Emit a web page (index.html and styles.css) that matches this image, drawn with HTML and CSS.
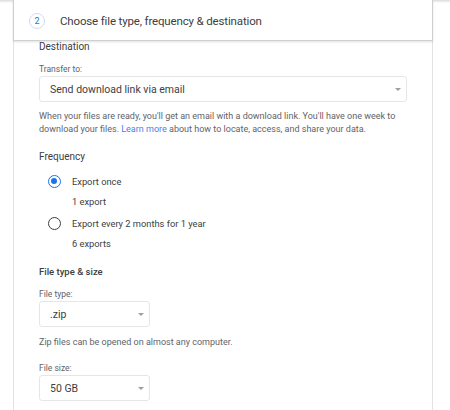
FILE: index.html
```html
<!DOCTYPE html>
<html>
<head>
<meta charset="utf-8">
<link rel="stylesheet" href="styles.css">
</head>
<body>
<div class="topshade"></div>
<div class="wrap">
  <div class="step-head">
    <span class="step-num">2</span>
    <span class="step-title">Choose file type, frequency &amp; destination</span>
  </div>
  <div class="step-body">
    <div class="heading">Destination</div>
    <div class="label">Transfer to:</div>
    <div class="select select-wide"><span>Send download link via email</span><span class="caret"></span></div>
    <p class="desc">When your files are ready, you'll get an email with a download link. You'll have one week to download your files. <a class="link">Learn more</a> about how to locate, access, and share your data.</p>

    <div class="heading heading-freq">Frequency</div>
    <div class="radio-row first"><span class="radio on"></span><span class="radio-text">Export once</span></div>
    <div class="sub">1 export</div>
    <div class="radio-row"><span class="radio"></span><span class="radio-text">Export every 2 months for 1 year</span></div>
    <div class="sub">6 exports</div>

    <div class="heading heading-type">File type &amp; size</div>
    <div class="label">File type:</div>
    <div class="select select-small"><span>.zip</span><span class="caret"></span></div>
    <div class="note">Zip files can be opened on almost any computer.</div>
    <div class="label label-size">File size:</div>
    <div class="select select-small"><span>50 GB</span><span class="caret"></span></div>
  </div>
</div>
</body>
</html>
```

FILE: styles.css
```css
* { box-sizing: border-box; }
html, body { margin: 0; padding: 0; background: #fff; }
body {
  font-family: Roboto, "Liberation Sans", Arial, sans-serif;
  color: #3c4043;
  height: 410px;
  overflow: hidden;
  display: flex;
  flex-direction: column;
}
.topshade {
  height: 3px;
  flex: none;
  background: linear-gradient(#dcdcdc, #f4f4f4 70%, #fff);
}
.wrap {
  margin-top: -3px;
  margin-left: 13px;
  width: 420px;
  flex: 1;
  display: flex;
  flex-direction: column;
}
.step-head {
  height: 41px;
  flex: none;
  border: 1px solid #cfcfcf;
  border-top: none;
  box-shadow: 0 1px 2px rgba(0,0,0,0.12);
  display: flex;
  align-items: center;
  padding-left: 15px;
  background: #fff;
  position: relative;
  padding-top: 1px;
}
.step-num {
  width: 16px;
  height: 16px;
  border: 1px solid #d2dcf0;
  border-radius: 50%;
  color: #1a73e8;
  font-size: 9px;
  display: flex;
  align-items: center;
  justify-content: center;
  padding-top: 1px;
}
.step-title {
  margin-left: 15px;
  font-size: 11.5px;
  color: #3c4043;
  letter-spacing: -0.15px;
}
.step-body {
  flex: 1;
  border-left: 1px solid #e3e3e3;
  border-right: 1px solid #e3e3e3;
  padding-left: 25px;
  padding-right: 25px;
}
.heading {
  font-size: 10px;
  line-height: 12px;
  color: #3c4043;
}
.heading-freq { margin-top: 15px; }
.heading-type { margin-top: 16px; font-size: 9.5px; font-weight: 500; }
.label {
  font-size: 8.5px;
  line-height: 10px;
  color: #5f6368;
  margin-top: 11px;
}
.label-size { margin-top: 15px; }
.select {
  margin-top: 2px;
  height: 26px;
  border: 1px solid #e6e6e6;
  border-radius: 3px;
  display: flex;
  align-items: center;
  justify-content: space-between;
  padding: 0 5px 0 10px;
  font-size: 10.5px;
  color: #3c4043;
}
.select-wide { width: 368px; }
.select-small { width: 111px; }
.caret {
  width: 0;
  height: 0;
  border-left: 3.5px solid transparent;
  border-right: 3.5px solid transparent;
  border-top: 3.5px solid #9aa0a6;
}
.desc {
  margin: 8px 0 0;
  font-size: 9px;
  line-height: 13px;
  color: #5f6368;
  width: 372px;
}
.link { color: #4a7ef0; }
.radio-row {
  display: flex;
  align-items: center;
  height: 16px;
  margin-top: 7px;
  padding-left: 9px;
}
.radio-row.first { margin-top: 10px; }
.radio {
  width: 13px;
  height: 13px;
  border: 1.5px solid #3c4043;
  border-radius: 50%;
  position: relative;
  flex: none;
}
.radio.on { border-color: #1a73e8; }
.radio.on::after {
  content: "";
  position: absolute;
  left: 2px; top: 2px;
  width: 6px; height: 6px;
  border-radius: 50%;
  background: #1a73e8;
}
.radio-text {
  margin-left: 11px;
  font-size: 9.3px;
  color: #3c4043;
}
.sub {
  margin-top: 7px;
  padding-left: 33px;
  font-size: 9.3px;
  line-height: 12px;
  color: #3c4043;
}
.note {
  margin-top: 9px;
  font-size: 9px;
  line-height: 12px;
  color: #5f6368;
}
```
